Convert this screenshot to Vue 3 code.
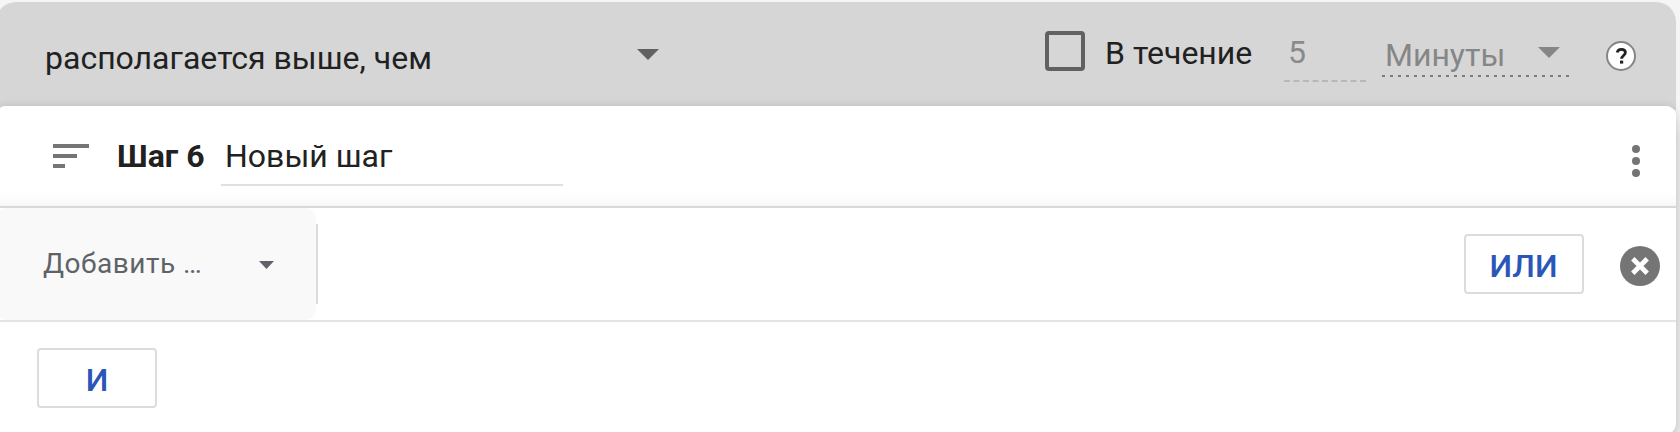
<script setup>
const stepTitle = 'Новый шаг'
</script>

<template>
  <main class="page">
    <section class="relation">
      <div class="relation-select">
        <span class="relation-text">располагается выше, чем</span>
        <svg class="arrow relation-arrow" viewBox="0 0 22 11"><path d="M0 0h22L11 11z" /></svg>
      </div>
      <span class="checkbox"></span>
      <span class="within">В течение</span>
      <div class="amount">
        <span>5</span>
        <svg class="dash" viewBox="0 0 82 2"><path d="M0 1h82" stroke-dasharray="6 3.5" /></svg>
      </div>
      <div class="unit">
        <div class="unit-row">
          <span>Минуты</span>
          <svg class="arrow unit-arrow" viewBox="0 0 22 11"><path d="M0 0h22L11 11z" /></svg>
        </div>
        <svg class="dots" viewBox="0 0 187 2"><path d="M0 1h187" stroke-dasharray="3 5" /></svg>
      </div>
      <svg class="help" viewBox="0 0 30 30">
        <circle cx="15" cy="15" r="14" />
        <path class="mark" d="M11.2 11.6c.4-2 1.9-3.2 4.2-3.2 2.4 0 4 1.2 4 3.2 0 2.8-3.8 3-3.8 6.2" />
        <path class="mark-dot" d="M14 19.6h3.2v3H14z" />
      </svg>
    </section>

    <section class="card">
      <header class="head">
        <svg class="sort" viewBox="0 0 36 24"><path d="M0 0h36v4H0zM0 10h24v4H0zM0 20h12v4H0z" /></svg>
        <b class="step">Шаг 6</b>
        <div class="title"><span>{{ stepTitle }}</span></div>
        <svg class="more" viewBox="0 0 8 32">
          <circle cx="4" cy="4" r="4" /><circle cx="4" cy="16" r="4" /><circle cx="4" cy="28" r="4" />
        </svg>
      </header>

      <div class="condition">
        <div class="add">
          <span class="add-text">Добавить …</span>
          <svg class="add-arrow" viewBox="0 0 15 8"><path d="M0 0h15L7.5 8z" /></svg>
        </div>
        <span class="divider"></span>
        <button class="btn or">ИЛИ</button>
        <svg class="close" viewBox="0 0 40 40">
          <circle cx="20" cy="20" r="20" />
          <path d="M12.8 12.8l14.4 14.4M27.2 12.8L12.8 27.2" />
        </svg>
      </div>

      <div class="footer"><button class="btn and">И</button></div>
    </section>
  </main>
</template>

<style>
body {
  background: #f5f5f5;
  overflow: hidden;
}
</style>

<style scoped>
.page {
  box-sizing: border-box;
  width: 1680px;
  height: 432px;
  padding-top: 2px;
  overflow: hidden;
  background: #f5f5f5;
  font-family: Roboto, "Noto Sans", sans-serif;
  font-size: 32px;
  line-height: 40px;
  color: #212121;
  white-space: nowrap;
}
svg {
  display: block;
  flex: none;
}
.relation {
  box-sizing: border-box;
  display: flex;
  align-items: flex-start;
  width: 1680px;
  height: 108px;
  margin-left: -4px;
  border-radius: 20px 20px 0 0;
  background: #d6d6d6;
}
.relation-select {
  box-sizing: border-box;
  display: flex;
  flex: none;
  width: 1045px;
  padding-left: 49px;
  margin-top: 36px;
  height: 40px;
}
.relation-text {
  width: 592px;
}
.arrow {
  width: 22px;
  height: 11px;
  fill: #616161;
}
.relation-arrow {
  margin-top: 11px;
}
.checkbox {
  box-sizing: border-box;
  flex: none;
  width: 40px;
  height: 40px;
  margin-top: 29px;
  margin-left: 4px;
  border: 4px solid #616161;
  border-radius: 4px;
}
.within {
  flex: none;
  width: 160px;
  margin: 31px 0 0 20px;
}
.amount {
  flex: none;
  width: 82px;
  margin: 30px 0 0 19px;
  color: #8a8a8a;
}
.amount span {
  display: block;
  height: 48px;
  padding-left: 4px;
}
.dash {
  width: 82px;
  height: 2px;
  stroke: #b8b8b8;
  stroke-width: 2;
}
.unit {
  flex: none;
  width: 188px;
  margin: 33px 0 0 16px;
  color: #868686;
}
.unit-row {
  display: flex;
  height: 40px;
  padding-left: 3px;
}
.unit-row span {
  width: 153px;
}
.unit-arrow {
  margin-top: 12px;
  fill: #868686;
}
.dots {
  width: 187px;
  height: 2px;
  stroke: #7c7c7c;
  stroke-width: 2;
}
.help {
  width: 30px;
  height: 30px;
  margin: 39px 0 0 36px;
}
.help circle {
  fill: #fff;
  stroke: #858585;
  stroke-width: 2;
}
.help .mark {
  fill: none;
  stroke: #222;
  stroke-width: 2.8;
}
.help .mark-dot {
  fill: #222;
}
.card {
  width: 1680px;
  height: 328px;
  margin: -4px 0 0 -4px;
  border-radius: 10px;
  background: #fff;
  box-shadow: 0 0 8px rgba(0, 0, 0, 0.12), 0 16px 18px rgba(0, 0, 0, 0.16);
}
.head {
  box-sizing: border-box;
  display: flex;
  align-items: flex-start;
  height: 102px;
  padding-left: 57px;
  border-bottom: 2px solid #d9d9d9;
  border-radius: 10px 10px 0 0;
  background: linear-gradient(#fff 86px, #fcfcfc 94px, #f6f6f6 100px);
}
.sort {
  width: 36px;
  height: 24px;
  margin-top: 38px;
  fill: #757575;
}
.step {
  width: 104px;
  margin: 30px 0 0 28px;
  font-weight: 700;
}
.title {
  box-sizing: border-box;
  width: 342px;
  height: 50px;
  margin-top: 30px;
  padding-left: 4px;
  border-bottom: 2px solid #e0e0e0;
}
.more {
  width: 8px;
  height: 32px;
  margin: 39px 36px 0 auto;
  fill: #757575;
}
.condition {
  box-sizing: border-box;
  display: flex;
  align-items: flex-start;
  height: 114px;
  border-bottom: 2px solid #e4e4e4;
}
.add {
  display: flex;
  width: 320px;
  height: 112px;
  border-radius: 10px;
  background: #f9f9f9;
}
.add-text {
  width: 216px;
  margin: 36px 0 0 47px;
  font-size: 28px;
  letter-spacing: 0.5px;
  color: #5f6368;
}
.add-arrow {
  width: 15px;
  height: 8px;
  margin-top: 53px;
  fill: #5f6368;
}
.divider {
  width: 2px;
  height: 80px;
  margin-top: 16px;
  background: #dadce0;
}
.btn {
  box-sizing: border-box;
  width: 120px;
  height: 60px;
  padding: 4px 0 0;
  border: 2px solid #dcdcdc;
  border-radius: 4px;
  background: #fff;
  color: #2a56b8;
  font: 500 32px/52px Roboto, "Noto Sans", sans-serif;
}
.or {
  margin: 26px 36px 0 auto;
  padding-right: 1px;
}
.close {
  width: 40px;
  height: 40px;
  margin: 38px 16px 0 0;
  fill: #757575;
}
.close path {
  fill: none;
  stroke: #fff;
  stroke-width: 4.8;
}
.footer {
  padding: 26px 0 0 41px;
}
.and {
  display: block;
}
</style>
